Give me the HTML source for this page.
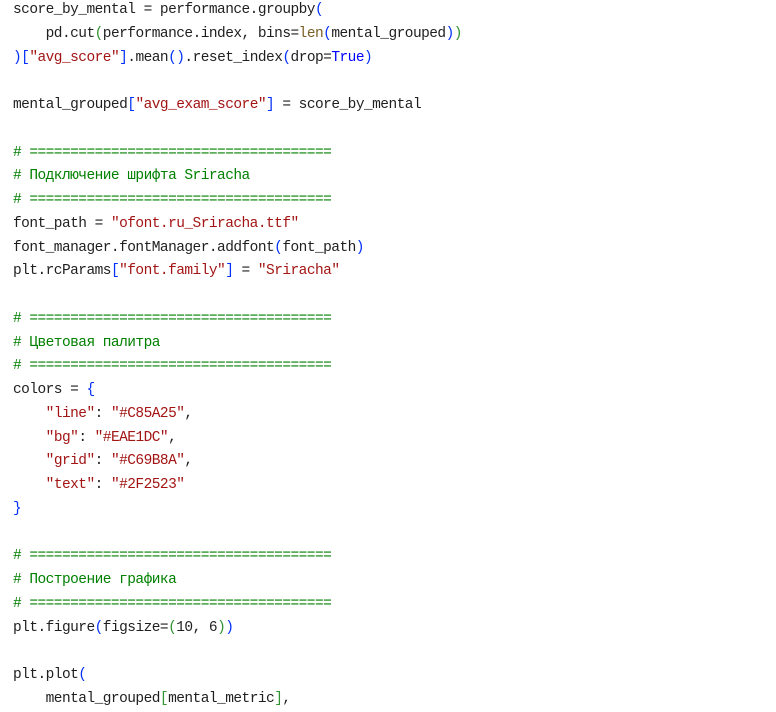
<!DOCTYPE html>
<html><head><meta charset="utf-8"><style>
html,body{margin:0;padding:0;background:#fff;width:776px;height:712px;overflow:hidden}
pre{margin:0;position:absolute;left:13px;top:-1px;font-family:"Liberation Mono","DejaVu Sans Mono",monospace;font-size:14.5px;letter-spacing:-0.54px;line-height:23.75px;color:#1f1f1f}
.s{color:#a31515}.c{color:#008000}.b{color:#0431fa}.g{color:#319331}.k{color:#0000ff}.f{color:#795e26}
</style></head><body>
<pre>score_by_mental = performance.groupby<span class="b">(</span>
    pd.cut<span class="g">(</span>performance.index, bins=<span class="f">len</span><span class="b">(</span>mental_grouped<span class="b">)</span><span class="g">)</span>
<span class="b">)[</span><span class="s">"avg_score"</span><span class="b">]</span>.mean<span class="b">()</span>.reset_index<span class="b">(</span>drop=<span class="k">True</span><span class="b">)</span>

mental_grouped<span class="b">[</span><span class="s">"avg_exam_score"</span><span class="b">]</span> = score_by_mental

<span class="c"># =====================================</span>
<span class="c"># Подключение шрифта Sriracha</span>
<span class="c"># =====================================</span>
font_path = <span class="s">"ofont.ru_Sriracha.ttf"</span>
font_manager.fontManager.addfont<span class="b">(</span>font_path<span class="b">)</span>
plt.rcParams<span class="b">[</span><span class="s">"font.family"</span><span class="b">]</span> = <span class="s">"Sriracha"</span>

<span class="c"># =====================================</span>
<span class="c"># Цветовая палитра</span>
<span class="c"># =====================================</span>
colors = <span class="b">{</span>
    <span class="s">"line"</span>: <span class="s">"#C85A25"</span>,
    <span class="s">"bg"</span>: <span class="s">"#EAE1DC"</span>,
    <span class="s">"grid"</span>: <span class="s">"#C69B8A"</span>,
    <span class="s">"text"</span>: <span class="s">"#2F2523"</span>
<span class="b">}</span>

<span class="c"># =====================================</span>
<span class="c"># Построение графика</span>
<span class="c"># =====================================</span>
plt.figure<span class="b">(</span>figsize=<span class="g">(</span>10, 6<span class="g">)</span><span class="b">)</span>

plt.plot<span class="b">(</span>
    mental_grouped<span class="g">[</span>mental_metric<span class="g">]</span>,
</pre>
</body></html>
